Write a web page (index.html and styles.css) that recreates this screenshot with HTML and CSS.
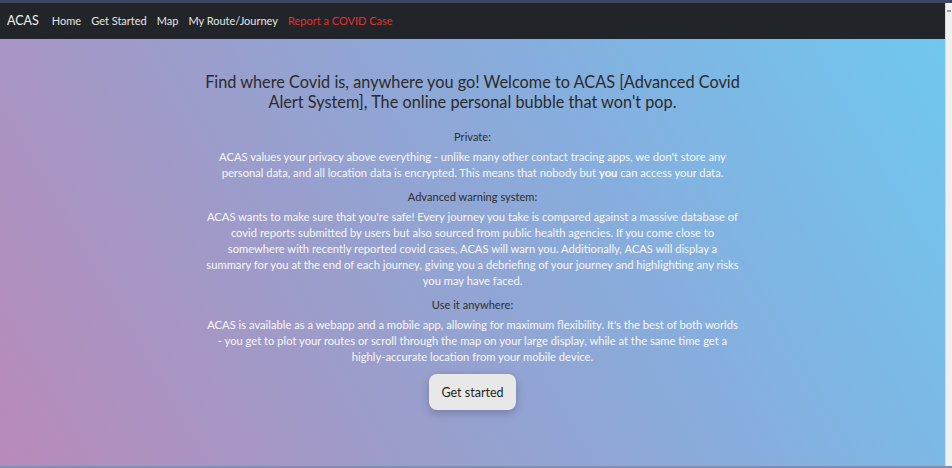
FILE: index.html
```html
<!DOCTYPE html>
<html lang="en">
<head>
    <meta charset="UTF-8">
    <meta name="viewport" content="width=device-width, initial-scale=1.0">
    <title>ACAS</title>
    <link rel="stylesheet" href="styles.css">
</head>
<body>
    <div class="tab-strip"></div>
    <div class="frame">
        <div class="page">
            <nav class="navbar">
                <span class="brand">ACAS</span>
                <a class="nav-link" href="#">Home</a>
                <a class="nav-link" href="#">Get Started</a>
                <a class="nav-link" href="#">Map</a>
                <a class="nav-link" href="#">My Route/Journey</a>
                <a class="nav-link report" href="#">Report a COVID Case</a>
            </nav>

            <main class="hero">
                <h1 class="title">Find where Covid is, anywhere you go! Welcome to ACAS [Advanced Covid Alert System], The online personal bubble that won't pop.</h1>

                <p class="label">Private:</p>
                <p class="blurb">ACAS values your privacy above everything - unlike many other contact tracing apps, we don't store any personal data, and all location data is encrypted. This means that nobody but <b>you</b> can access your data.</p>

                <p class="label">Advanced warning system:</p>
                <p class="blurb">ACAS wants to make sure that you're safe! Every journey you take is compared against a massive database of covid reports submitted by users but also sourced from public health agencies. If you come close to somewhere with recently reported covid cases, ACAS will warn you. Additionally, ACAS will display a summary for you at the end of each journey, giving you a debriefing of your journey and highlighting any risks you may have faced.</p>

                <p class="label">Use it anywhere:</p>
                <p class="blurb">ACAS is available as a webapp and a mobile app, allowing for maximum flexibility. It's the best of both worlds - you get to plot your routes or scroll through the map on your large display, while at the same time get a highly-accurate location from your mobile device.</p>

                <button class="start-btn">Get started</button>
            </main>
        </div>
        <div class="scrollbar">
            <span class="arrow"></span>
        </div>
    </div>
    <div class="bottom-strip"></div>
</body>
</html>
```

FILE: styles.css
```css
html, body {
    margin: 0;
    height: 100%;
}
body {
    display: flex;
    flex-direction: column;
    font-family: Lato, "Open Sans", sans-serif;
    overflow: hidden;
}
.tab-strip {
    height: 3px;
    background: #3c4463;
}
.frame {
    flex: 1;
    display: flex;
    min-height: 0;
}
.page {
    flex: 1;
    display: flex;
    flex-direction: column;
}
.navbar {
    height: 36px;
    background: #212529;
    display: flex;
    align-items: center;
    padding: 0 0 2px 7px;
    box-sizing: border-box;
}
.brand {
    color: #f2f2f2;
    font-size: 12.5px;
    margin-right: 8px;
}
.nav-link {
    color: #e4e4e4;
    font-size: 11px;
    text-decoration: none;
    padding: 0 5px;
}
.nav-link.report {
    color: #e2312d;
}
.hero {
    flex: 1;
    background: linear-gradient(60deg, #b98ab9 0%, #9b9dcb 35%, #86aede 65%, #6fc8f0 100%);
    display: flex;
    flex-direction: column;
    align-items: center;
    padding: 33px 0 0;
}
.title {
    width: 560px;
    margin: 0 0 17px;
    font-size: 16.3px;
    line-height: 20px;
    font-weight: normal;
    text-align: center;
    color: #2b2b2b;
}
.label {
    margin: 0 0 4px;
    font-size: 11.1px;
    line-height: 16px;
    color: #2f2f2f;
}
.blurb {
    width: 533px;
    margin: 0 0 8px;
    font-size: 11.2px;
    line-height: 16px;
    text-align: center;
    color: #f7f7f7;
}
.start-btn {
    margin-top: 1px;
    width: 87px;
    height: 36px;
    border: none;
    border-radius: 8px;
    background: #e8e8e8;
    color: #1e1e1e;
    font-family: inherit;
    font-size: 12.5px;
    box-shadow: 0 3px 8px rgba(60, 60, 90, 0.35);
}
.scrollbar {
    width: 6px;
    background: #f0f0f0;
    border-left: 1px solid #d8d8d8;
    position: relative;
}
.scrollbar .arrow {
    position: absolute;
    top: 7px;
    left: 1px;
    width: 4px;
    height: 2px;
    background: #9a9a9a;
}
.bottom-strip {
    height: 2px;
    background: #7f8fb4;
}
```
